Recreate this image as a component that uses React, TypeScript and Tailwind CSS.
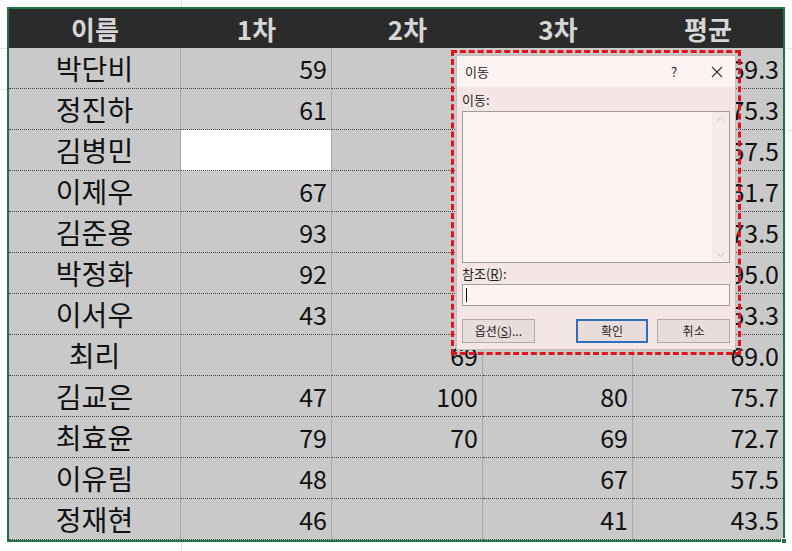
import React from "react"

type Row = { name: string; v: string[]; blank?: number }

// cells fully covered by the dialog are left empty
const rows: Row[] = [
  { name: "박단비", v: ["59", "", "", "69.3"] },
  { name: "정진하", v: ["61", "", "", "75.3"] },
  { name: "김병민", v: ["", "", "", "57.5"], blank: 0 },
  { name: "이제우", v: ["67", "", "", "61.7"] },
  { name: "김준용", v: ["93", "", "", "73.5"] },
  { name: "박정화", v: ["92", "", "", "95.0"] },
  { name: "이서우", v: ["43", "", "", "53.3"] },
  { name: "최리", v: ["", "69", "", "69.0"] },
  { name: "김교은", v: ["47", "100", "80", "75.7"] },
  { name: "최효윤", v: ["79", "70", "69", "72.7"] },
  { name: "이유림", v: ["48", "", "67", "57.5"] },
  { name: "정재현", v: ["46", "", "41", "43.5"] },
]

const cols = "grid grid-cols-[172px_151px_151px_150px_150px]"
const kr = { fontFamily: '"Noto Sans CJK KR", "Noto Sans", sans-serif' }

function GoToDialog() {
  return (
    <div className="absolute left-[451px] top-[50px] w-[290px] h-[305px] border-[3px] border-dashed border-[#e0151b] p-[2px]">
      <div className="h-full border border-[#c9bcbb] bg-[#f4e6e5] text-[13px] text-[#1e1e1e] leading-none flex flex-col" style={kr}>
        <div className="h-[31px] bg-[#fdf3f2] flex items-center pl-[8px] pr-[12px]">
          <span className="flex-1">이동</span>
          <span className="w-[12px] text-center mr-[31px]">?</span>
          <svg width="12" height="12" viewBox="0 0 12 12" className="text-[#333]">
            <path d="M1 1 L11 11 M11 1 L1 11" stroke="currentColor" strokeWidth="1.1" />
          </svg>
        </div>
        <div className="flex-1 px-[5px] flex flex-col">
          <div className="h-[24px] flex items-end pb-[5px]">이동:</div>
          <div className="h-[152px] border border-[#a49c9b] bg-[#fdf3f3] flex justify-end">
            <div className="w-[17px] bg-[#f6eaea] flex flex-col items-center justify-between py-[4px] text-[#c3b9b8]">
              <svg width="9" height="6" viewBox="0 0 9 6"><path d="M1 5 L4.5 1.5 L8 5" stroke="currentColor" fill="none" /></svg>
              <svg width="9" height="6" viewBox="0 0 9 6"><path d="M1 1 L4.5 4.5 L8 1" stroke="currentColor" fill="none" /></svg>
            </div>
          </div>
          <div className="h-[21px] flex items-end pb-[4px]">
            참조(<span className="underline">R</span>):
          </div>
          <div className="h-[22px] border border-[#a49c9b] bg-[#fdf3f3] flex items-center pl-[3px]">
            <div className="w-px h-[14px] bg-[#111]" />
          </div>
          <div className="flex items-center mt-[13px] text-[12px]">
            <div className="w-[73px] h-[24px] border border-[#b3aaa9] bg-[#e9dddc] flex items-center justify-center">
              옵션(<span className="underline">S</span>)...
            </div>
            <div className="ml-[41px] w-[73px] h-[24px] border-2 border-[#2f6fc0] bg-[#e9dddc] flex items-center justify-center">
              확인
            </div>
            <div className="ml-[9px] w-[73px] h-[24px] border border-[#b3aaa9] bg-[#e9dddc] flex items-center justify-center">
              취소
            </div>
          </div>
        </div>
      </div>
    </div>
  )
}

export default function App() {
  return (
    <div className="relative w-[792px] h-[551px] bg-white overflow-hidden" style={kr}>
      <div className="absolute left-0 top-[48px] w-[8px] h-px bg-[#e2e2e2]" />
      <div className="absolute left-0 top-[89px] w-[8px] h-px bg-[#e2e2e2]" />
      <div className="absolute left-[181px] top-0 w-px h-[8px] bg-[#e2e2e2]" />
      <div className="absolute left-[181px] top-[543px] w-px h-[8px] bg-[#e2e2e2]" />
      <div className="absolute right-0 top-[48px] w-[6px] h-px bg-[#e2e2e2]" />
      <div className="absolute right-0 top-[130px] w-[6px] h-px bg-[#e2e2e2]" />

      <div className="absolute left-[7px] top-[7px] border-2 border-[#217346]">
        <div className={`${cols} h-[39px] bg-[#2b2b2b] text-[#d6d6d6] text-[26px] font-bold leading-none`}>
          {["이름", "1차", "2차", "3차", "평균"].map((h) => (
            <div key={h} className="flex items-center justify-center">
              {h}
            </div>
          ))}
        </div>
        {rows.map((r, i) => (
          <div key={i} className={`${cols} h-[41px] bg-[#c9c9c9] text-[25px] text-[#111] leading-none`}>
            <div
              className="flex items-center justify-center text-[28px] border-r border-r-[#a8a8a8] border-b border-b-[#4a4a4a] border-dotted"
              style={{ borderRightStyle: "solid" }}
            >
              {r.name}
            </div>
            {r.v.map((v, j) => (
              <div
                key={j}
                className={`flex items-center justify-end pr-[4px] border-b border-dotted border-b-[#4a4a4a] ${j < 3 ? "border-r border-r-[#a8a8a8]" : ""} ${r.blank === j ? "bg-white" : ""}`}
                style={j < 3 ? { borderRightStyle: "solid" } : undefined}
              >
                {v}
              </div>
            ))}
          </div>
        ))}
        <div className="absolute -right-[4px] -bottom-[4px] w-[6px] h-[6px] bg-[#217346] border border-white" />
      </div>

      <GoToDialog />
    </div>
  )
}
